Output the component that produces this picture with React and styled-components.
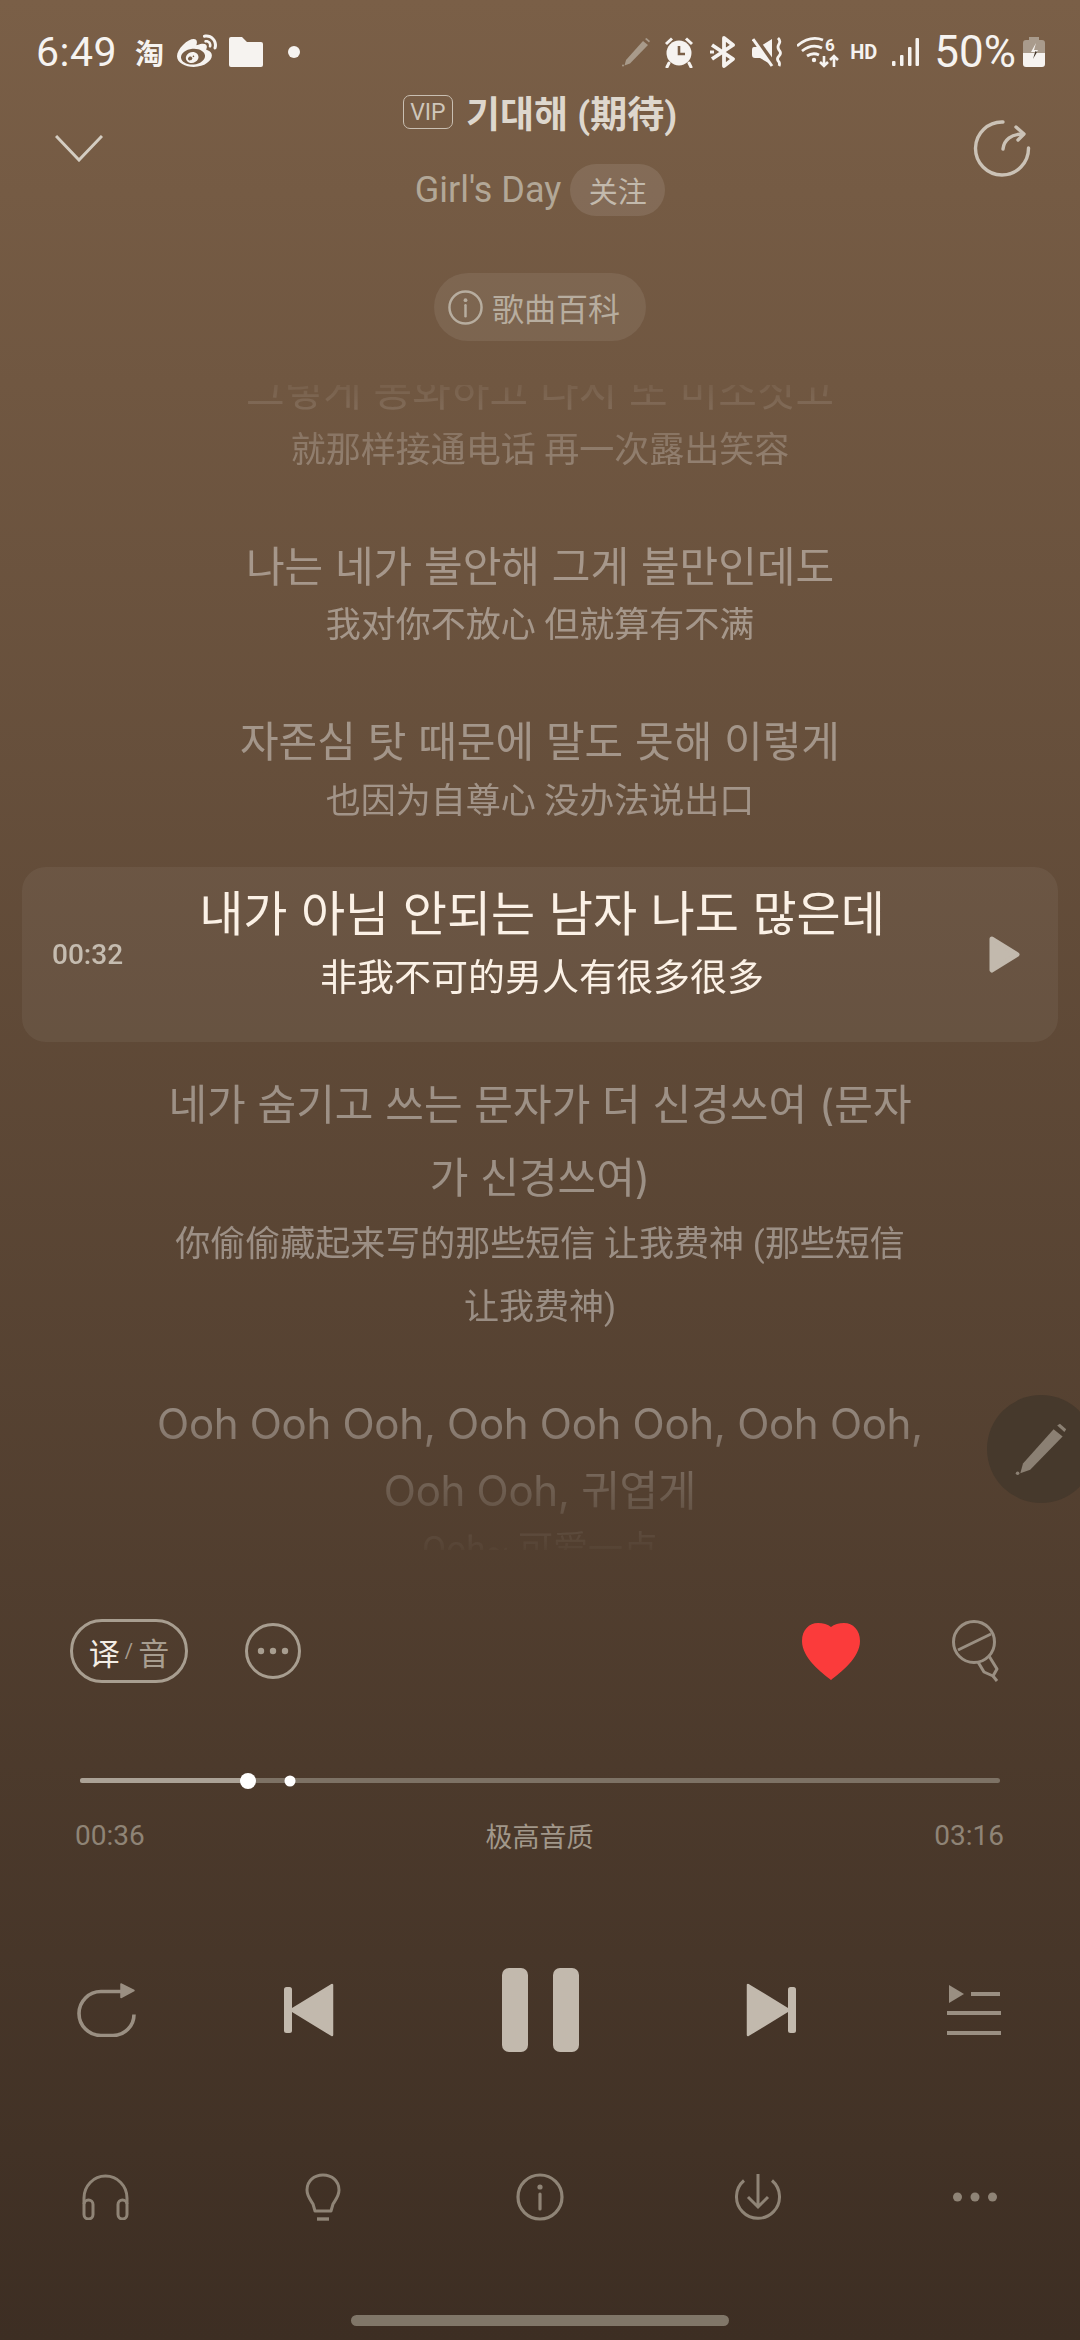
import React from 'react';
import styled, { createGlobalStyle } from 'styled-components';
import { FaWeibo } from 'react-icons/fa';

const GlobalStyle = createGlobalStyle`
  html, body {
    margin: 0;
    padding: 0;
    background: #3d2e23;
  }
`;

const SANS = `Roboto, "Noto Sans CJK KR", "Noto Sans CJK SC", sans-serif`;
const LYRIC = `Inter, "Noto Sans CJK KR", "Noto Sans CJK SC", sans-serif`;
const ZH = `Roboto, "Noto Sans CJK SC", sans-serif`;

const Page = styled.div`
  position: relative;
  width: 1080px;
  height: 2340px;
  overflow: hidden;
  display: flex;
  flex-direction: column;
  font-family: ${SANS};
  background: linear-gradient(180deg, #7a5f47 0%, #3d2e23 100%);
`;

/* status bar */
const StatusBar = styled.div`
  height: 96px;
  box-sizing: border-box;
  padding: 34px 35px 0 36px;
  display: flex;
  justify-content: space-between;
  color: #f6f3f0;
`;

const StatusGroup = styled.div`
  height: 36px;
  display: flex;
  align-items: center;
`;

const Clock = styled.span`
  font-size: 41px;
  line-height: 36px;
  letter-spacing: 0.5px;
`;

const TaobaoGlyph = styled.span`
  margin-left: 18px;
  font-family: "Noto Sans CJK SC", sans-serif;
  font-size: 29px;
  font-weight: 700;
  line-height: 36px;
`;

const Slot = styled.span`
  display: flex;
  align-items: center;
  margin-left: ${p => p.$ml || 0}px;
`;

const Dot = styled.span`
  width: 12px;
  height: 12px;
  margin-left: 25px;
  border-radius: 50%;
  background: #f6f3f0;
`;

const HdLabel = styled.span`
  margin-left: 11px;
  font-size: 20px;
  font-weight: 700;
`;

const Battery = styled.span`
  margin-left: 15px;
  font-size: 44px;
  line-height: 36px;
`;

/* header */
const Header = styled.div`
  position: relative;
  display: flex;
  flex-direction: column;
  align-items: center;
`;

const TitleRow = styled.div`
  height: 38px;
  margin-top: -3px;
  margin-bottom: 3px;
  display: flex;
  align-items: center;
  gap: 13px;
`;

const VipBadge = styled.span`
  box-sizing: border-box;
  width: 50px;
  height: 34px;
  border: 1.5px solid #c9bfb2;
  border-radius: 7px;
  display: flex;
  align-items: center;
  justify-content: center;
  font-size: 23px;
  color: #cfc6ba;
`;

const Title = styled.span`
  font-size: 37px;
  font-weight: 700;
  color: #ded7cd;
`;

const ArtistRow = styled.div`
  margin-top: 30px;
  display: flex;
  align-items: center;
  gap: 9px;
`;

const Artist = styled.span`
  font-size: 36px;
  color: #b2a797;
`;

const FollowPill = styled.span`
  width: 95px;
  height: 52px;
  border-radius: 26px;
  background: rgba(255, 255, 255, 0.1);
  display: flex;
  align-items: center;
  justify-content: center;
  font-family: ${ZH};
  font-size: 29px;
  color: #c2b9ac;
`;

const HeaderButton = styled.span`
  position: absolute;
  top: ${p => p.$top}px;
  left: ${p => p.$left}px;
  display: flex;
`;

const WikiPill = styled.div`
  align-self: center;
  margin-top: 57px;
  width: 212px;
  height: 68px;
  box-sizing: border-box;
  padding-left: 14px;
  border-radius: 34px;
  background: rgba(255, 255, 255, 0.08);
  display: flex;
  align-items: center;
  gap: 9px;
  font-family: ${ZH};
  font-size: 32px;
  color: #b7ad9f;
`;

/* lyrics */
const fade = `linear-gradient(180deg, rgba(0,0,0,0.15) 0, rgba(0,0,0,0.6) 70px, #000 170px, #000 1010px, rgba(0,0,0,0.4) 1105px, rgba(0,0,0,0.06) 1165px)`;

const Lyrics = styled.div`
  margin-top: 44px;
  height: 1165px;
  overflow: hidden;
  -webkit-mask-image: ${fade};
  mask-image: ${fade};
`;

const LyricsInner = styled.div`
  margin-top: -28px;
  display: flex;
  flex-direction: column;
  align-items: center;
`;

const Verse = styled.div`
  width: 900px;
  margin-bottom: 51px;
  text-align: center;
  white-space: pre-line;
  font-family: ${LYRIC};
  color: rgba(255, 255, 255, 0.4);
`;

const Ko = styled.div`
  font-size: 42px;
  line-height: ${p => p.$lh || 67}px;
  letter-spacing: ${p => p.$track || 0}px;
`;

const Zh = styled.div`
  margin-top: ${p => p.$mt ?? -5.5}px;
  font-family: ${ZH};
  font-size: 35px;
  line-height: 63px;
`;

const ActiveVerse = styled.div`
  align-self: stretch;
  margin: -17px 22px 26px;
  height: 175px;
  border-radius: 24px;
  background: rgba(255, 255, 255, 0.055);
  display: grid;
  grid-template-columns: 120px 1fr 120px;
  align-items: center;
`;

const ActiveLines = styled.div`
  align-self: start;
  padding: 13px 0 0 4px;
  text-align: center;
  white-space: nowrap;
  font-family: ${LYRIC};
  color: #fbf1e6;
`;

const ActiveKo = styled(Ko)`
  font-size: 48px;
`;

const ActiveZh = styled(Zh)`
  font-size: 37px;
`;

const LineTime = styled.span`
  padding-left: 30px;
  font-size: 28px;
  font-weight: 500;
  color: #c5bcb0;
`;

const PlayLine = styled.span`
  display: flex;
  justify-content: flex-end;
  padding-right: 38px;
`;

const NoteButton = styled.div`
  position: absolute;
  left: 987px;
  top: 1395px;
  width: 108px;
  height: 108px;
  border-radius: 50%;
  background: #46392c;
  display: flex;
  align-items: center;
  padding-left: 27px;
  box-sizing: border-box;
`;

/* actions */
const ActionRow = styled.div`
  margin-top: 69px;
  height: 64px;
  padding: 0 80px 0 70px;
  display: flex;
  align-items: center;
  justify-content: space-between;
`;

const ActionGroup = styled.div`
  display: flex;
  align-items: center;
  gap: ${p => p.$gap}px;
`;

const ModePill = styled.div`
  box-sizing: border-box;
  width: 118px;
  height: 64px;
  border: 3px solid #a89e90;
  border-radius: 32px;
  display: flex;
  align-items: center;
  justify-content: center;
  gap: 5px;
  font-family: ${ZH};
  font-size: 31px;
  color: #a89e90;
`;

const ModeOn = styled.span`
  color: #f3ede5;
`;

const ModeSlash = styled.span`
  font-size: 20px;
  color: #a89e90;
`;

/* slider */
const Track = styled.div`
  position: relative;
  margin: 95px 80px 0;
  height: 5px;
  border-radius: 3px;
  background: #7d7265;
`;

const TrackFill = styled.div`
  height: 100%;
  width: ${p => p.$pct}%;
  border-radius: 3px;
  background: #aba296;
`;

const TrackDot = styled.span`
  position: absolute;
  top: 50%;
  left: ${p => p.$pct}%;
  width: ${p => p.$size}px;
  height: ${p => p.$size}px;
  border-radius: 50%;
  background: #fff;
  transform: translate(-50%, -50%);
`;

const TimeRow = styled.div`
  margin-top: 37px;
  height: 30px;
  padding: 0 76px 0 75px;
  display: flex;
  align-items: center;
  justify-content: space-between;
  font-size: 28px;
  color: #8f8476;
`;

const Quality = styled.span`
  font-family: ${ZH};
  font-size: 27px;
  color: #a1978a;
`;

/* transport */
const Transport = styled.div`
  margin-top: 118px;
  height: 84px;
  padding: 0 19px;
  display: grid;
  grid-template-columns: 174px 232px 230px 232px 174px;
  align-items: center;
  justify-items: center;
`;

const Tools = styled.div`
  margin-top: 121px;
  height: 48px;
  padding: 0 60px;
  display: flex;
  justify-content: space-between;
`;

const ToolSlot = styled.span`
  width: 90px;
  display: flex;
  align-items: center;
  justify-content: center;
`;

const PauseBars = styled.div`
  display: flex;
  gap: 25px;
`;

const PauseBar = styled.span`
  width: 26px;
  height: 84px;
  border-radius: 7px;
  background: #c2b9ad;
`;

const HomeBar = styled.div`
  align-self: center;
  margin-top: 94px;
  width: 378px;
  height: 11px;
  border-radius: 6px;
  background: #807668;
`;

const SOFT = '#9a8f82';
const TOOL = '#8f8476';
const SOLID = '#c2b9ad';

const Pencil = ({ size = 30, color = '#a89a8a' }) => (
  <svg width={size} height={size} viewBox="0 0 30 30" fill={color}>
    <path d="M22 4l5 4L9 26.500l-5.500 2 1.500-5.500z" />
    <path d="M24 2l1.500-1 3.500 3-1 1.500z" />
    <circle cx="2" cy="28.500" r="1" />
  </svg>
);

const Alarm = () => (
  <svg width="30" height="32" viewBox="0 0 30 32" fill="#f6f3f0">
    <circle cx="15" cy="17" r="12.500" />
    <path d="M2 8l6-5.500M28 8l-6-5.500" stroke="#f6f3f0" strokeWidth="3" />
    <path d="M5 27l-2 4M25 27l2 4" stroke="#f6f3f0" strokeWidth="3" strokeLinecap="round" />
    <path d="M15 10v8h6" stroke="#7a5f47" strokeWidth="2.600" fill="none" />
  </svg>
);

const Bluetooth = () => (
  <svg width="26" height="32" viewBox="0 0 26 32" fill="none" stroke="#f6f3f0" strokeWidth="3.800" strokeLinejoin="round">
    <path d="M2 9l21 14-9 7V2l9 7L2 23" />
    <path d="M0 16h4" strokeWidth="3" />
  </svg>
);

const MuteVibrate = () => (
  <svg width="30" height="30" viewBox="0 0 30 30" fill="none">
    <path d="M2 10h5L20 2v26L8 21H3q-3 0-3-3v-5q0-3 2-3z" fill="#f6f3f0" />
    <path d="M3 1l20 28" stroke="#7a5f47" strokeWidth="5" />
    <path d="M1 2l19 27" stroke="#f6f3f0" strokeWidth="3" />
    <path d="M26 1q3 3 1 6t0 6q3 3 0 6t0 6q1 2 0 4" stroke="#f6f3f0" strokeWidth="2.800" />
  </svg>
);

const Wifi = () => (
  <svg width="42" height="32" viewBox="0 0 42 32" fill="none" stroke="#f6f3f0" strokeWidth="2.800">
    <path d="M0 10q13-11 26-6M5 15q10-8 20-3M10 20q6-4 12-1" />
    <circle cx="17" cy="24" r="2.200" fill="#f6f3f0" stroke="none" />
    <path d="M27 20v10m-4-4l4 4 4-4M37 31V20m-4 4l4-4 4 4" strokeWidth="2.600" />
    <text x="28" y="15" fontSize="17" fontWeight="700" fill="#f6f3f0" stroke="none" fontFamily="Roboto, sans-serif">6</text>
  </svg>
);

const Signal = () => (
  <svg width="27" height="30" viewBox="0 0 27 30" fill="#f6f3f0">
    <rect x="0" y="24" width="3.500" height="5" rx="1" />
    <rect x="8" y="18" width="3.500" height="11" rx="1" />
    <rect x="16" y="10" width="3.500" height="19" rx="1" />
    <rect x="23.500" y="1" width="3.500" height="28" rx="1" />
  </svg>
);

const BatteryIcon = () => (
  <svg width="22" height="30" viewBox="0 0 22 30">
    <path d="M6 0h10v3h3q3 0 3 3v10H0V6q0-3 3-3h3z" fill="#a99b8c" />
    <path d="M0 16h22v11q0 3-3 3H3q-3 0-3-3z" fill="#f6f3f0" />
    <path d="M13 6l-5 9h4l-3 8 6-10h-4z" fill="#f6f3f0" />
    <path d="M12.500 14l-1 3-1.500 5 4-7z" fill="#3c2e22" />
  </svg>
);

const Folder = () => (
  <svg width="34" height="30" viewBox="0 0 34 30" fill="#f6f3f0">
    <path d="M0 2q0-2 2-2h11l5 5h14q2 0 2 2v21q0 2-2 2H2q-2 0-2-2z" />
  </svg>
);

const Chevron = () => (
  <svg width="48" height="27" viewBox="0 0 48 27" fill="none" stroke="#d4cdc2" strokeWidth="3">
    <path d="M1 1l23 24L47 1" />
  </svg>
);

const Share = () => (
  <svg width="58" height="58" viewBox="0 0 58 58" fill="none" stroke="#cbc2b6" strokeWidth="3.400" strokeLinecap="round" strokeLinejoin="round">
    <path d="M30 2A26.500 26.500 0 1 0 55.500 28" />
    <path d="M30 29C31 20 38 14 50 14" />
    <path d="M43 7L51 14L45 20" />
  </svg>
);

const InfoIcon = ({ size, color, width }) => (
  <svg width={size} height={size} viewBox="0 0 48 48" fill="none" stroke={color} strokeWidth={width}>
    <circle cx="24" cy="24" r="22" />
    <circle cx="24" cy="14" r="2.600" fill={color} stroke="none" />
    <path d="M24 21v15" strokeLinecap="round" />
  </svg>
);

const PlayIcon = () => (
  <svg width="31" height="37" viewBox="0 0 31 37" fill="#c2b9ad" stroke="#c2b9ad" strokeWidth="5" strokeLinejoin="round">
    <path d="M3 3l25 15.500L3 34z" />
  </svg>
);

const MoreCircle = () => (
  <svg width="56" height="56" viewBox="0 0 56 56" fill="#a89e90">
    <circle cx="28" cy="28" r="26.500" fill="none" stroke="#a89e90" strokeWidth="3" />
    <circle cx="16" cy="28" r="3.200" />
    <circle cx="28" cy="28" r="3.200" />
    <circle cx="40" cy="28" r="3.200" />
  </svg>
);

const Heart = () => (
  <svg width="58" height="57" viewBox="0 0 58 57" fill="#fb3b3b">
    <path d="M29 4C32 1.500 37 0 42 0 51 0 58 7 58 18 58 35 38 50 29 57 20 50 0 35 0 18 0 7 7 0 16 0 21 0 26 1.500 29 4z" />
  </svg>
);

const Mic = () => (
  <svg width="48" height="62" viewBox="0 0 48 62" fill="none" stroke={SOFT} strokeWidth="3">
    <circle cx="22" cy="22" r="20.500" />
    <path d="M6 30L39 14" />
    <path d="M26 42L32 52L41 56L45 49L37 36" strokeLinejoin="round" />
    <path d="M41 56L45 61" />
  </svg>
);

const Repeat = () => (
  <svg width="60" height="54" viewBox="0 0 60 54" fill="none" stroke={SOFT} strokeWidth="3.600">
    <path d="M46 8.500H25A22 22 0 0 0 25 52.500H37A21 21 0 0 0 58 31.500" />
    <path d="M45 1L58 7.500L45 14.500z" fill={SOFT} stroke={SOFT} strokeWidth="1.500" strokeLinejoin="round" />
  </svg>
);

const Skip = ({ flip }) => (
  <svg width="50" height="54" viewBox="0 0 50 54" fill={SOLID} style={flip ? { transform: 'scaleX(-1)' } : undefined}>
    <rect x="0" y="4" width="8" height="46" rx="2.500" />
    <path d="M48 2V52L7 27z" stroke={SOLID} strokeWidth="2.500" strokeLinejoin="round" />
  </svg>
);

const Queue = () => (
  <svg width="54" height="50" viewBox="0 0 54 50" fill={SOFT}>
    <path d="M2 0l15 9-15 9z" />
    <path d="M24 9h29M0 28h54M0 48h54" stroke={SOFT} strokeWidth="4" />
  </svg>
);

const Headphones = () => (
  <svg width="47" height="46" viewBox="0 0 47 46" fill="none" stroke={TOOL} strokeWidth="3">
    <path d="M2 30V24a21.500 22 0 0 1 43 0v6" />
    <rect x="2" y="26" width="9" height="19" rx="4.500" />
    <rect x="36" y="26" width="9" height="19" rx="4.500" />
  </svg>
);

const Bulb = () => (
  <svg width="36" height="48" viewBox="0 0 36 48" fill="none" stroke={TOOL} strokeWidth="3">
    <path d="M10 38h16l2-7c3-5 6-8 6-14C34 8 27 2 18 2S2 8 2 17c0 6 3 9 6 14z" strokeLinejoin="round" />
    <path d="M12 46h12" strokeWidth="3.400" />
  </svg>
);

const Download = () => (
  <svg width="46" height="46" viewBox="0 0 46 46" fill="none" stroke={TOOL} strokeWidth="3">
    <path d="M9 6.500a21.500 21.500 0 1 0 28 0" />
    <path d="M23 0v33M13 23l10 10 10-10" />
  </svg>
);

const MoreDots = () => (
  <svg width="44" height="10" viewBox="0 0 44 10" fill={TOOL}>
    <circle cx="4.500" cy="5" r="4.500" />
    <circle cx="22" cy="5" r="4.500" />
    <circle cx="39.500" cy="5" r="4.500" />
  </svg>
);

const verses = [
  { ko: '그렇게 통화하고 다시 또 미소짓고', zh: '就那样接通电话 再一次露出笑容' },
  { ko: '나는 네가 불안해 그게 불만인데도', zh: '我对你不放心 但就算有不满' },
  { ko: '자존심 탓 때문에 말도 못해 이렇게', zh: '也因为自尊心 没办法说出口' },
  { active: true, time: '00:32', ko: '내가 아님 안되는 남자 나도 많은데', zh: '非我不可的男人有很多很多' },
  {
    ko: '네가 숨기고 쓰는 문자가 더 신경쓰여 (문자\n가 신경쓰여)',
    zh: '你偷偷藏起来写的那些短信 让我费神 (那些短信\n让我费神)',
    lh: 73,
    zhMt: -1,
  },
  { ko: 'Ooh Ooh Ooh, Ooh Ooh Ooh, Ooh Ooh,\nOoh Ooh, 귀엽게', zh: 'Ooh~ 可爱一点', track: -0.3 },
];

const App = () => (
  <Page>
    <GlobalStyle />
    <StatusBar>
      <StatusGroup>
        <Clock>6:49</Clock>
        <TaobaoGlyph>淘</TaobaoGlyph>
        <Slot $ml={13}><FaWeibo size={40} /></Slot>
        <Slot $ml={12}><Folder /></Slot>
        <Dot />
      </StatusGroup>
      <StatusGroup>
        <Pencil />
        <Slot $ml={13}><Alarm /></Slot>
        <Slot $ml={16}><Bluetooth /></Slot>
        <Slot $ml={16}><MuteVibrate /></Slot>
        <Slot $ml={15}><Wifi /></Slot>
        <HdLabel>HD</HdLabel>
        <Slot $ml={15}><Signal /></Slot>
        <Battery>50%</Battery>
        <Slot $ml={7}><BatteryIcon /></Slot>
      </StatusGroup>
    </StatusBar>

    <Header>
      <TitleRow>
        <VipBadge>VIP</VipBadge>
        <Title>기대해 (期待)</Title>
      </TitleRow>
      <ArtistRow>
        <Artist>Girl's Day</Artist>
        <FollowPill>关注</FollowPill>
      </ArtistRow>
      <HeaderButton $left={55} $top={39}><Chevron /></HeaderButton>
      <HeaderButton $left={973} $top={24}><Share /></HeaderButton>
    </Header>

    <WikiPill>
      <InfoIcon size={35} color="#b7ad9f" width={3.400} />
      歌曲百科
    </WikiPill>

    <Lyrics>
      <LyricsInner>
        {verses.map(v =>
          v.active ? (
            <ActiveVerse key={v.ko}>
              <LineTime>{v.time}</LineTime>
              <ActiveLines>
                <ActiveKo>{v.ko}</ActiveKo>
                <ActiveZh $mt={0}>{v.zh}</ActiveZh>
              </ActiveLines>
              <PlayLine><PlayIcon /></PlayLine>
            </ActiveVerse>
          ) : (
            <Verse key={v.ko}>
              <Ko $lh={v.lh} $track={v.track}>{v.ko}</Ko>
              <Zh $mt={v.zhMt}>{v.zh}</Zh>
            </Verse>
          )
        )}
      </LyricsInner>
    </Lyrics>

    <NoteButton><Pencil size={54} color="#8b8073" /></NoteButton>

    <ActionRow>
      <ActionGroup $gap={57}>
        <ModePill>
          <ModeOn>译</ModeOn>
          <ModeSlash>/</ModeSlash>
          音
        </ModePill>
        <MoreCircle />
      </ActionGroup>
      <ActionGroup $gap={92}>
        <Heart />
        <Mic />
      </ActionGroup>
    </ActionRow>

    <Track>
      <TrackFill $pct={18.3} />
      <TrackDot $pct={18.3} $size={16} />
      <TrackDot $pct={22.8} $size={11} />
    </Track>
    <TimeRow>
      <span>00:36</span>
      <Quality>极高音质</Quality>
      <span>03:16</span>
    </TimeRow>

    <Transport>
      <Repeat />
      <Skip />
      <PauseBars>
        <PauseBar />
        <PauseBar />
      </PauseBars>
      <Skip flip />
      <Queue />
    </Transport>

    <Tools>
      <ToolSlot><Headphones /></ToolSlot>
      <ToolSlot><Bulb /></ToolSlot>
      <ToolSlot><InfoIcon size={48} color={TOOL} width={3.200} /></ToolSlot>
      <ToolSlot><Download /></ToolSlot>
      <ToolSlot><MoreDots /></ToolSlot>
    </Tools>

    <HomeBar />
  </Page>
);

export default App;
